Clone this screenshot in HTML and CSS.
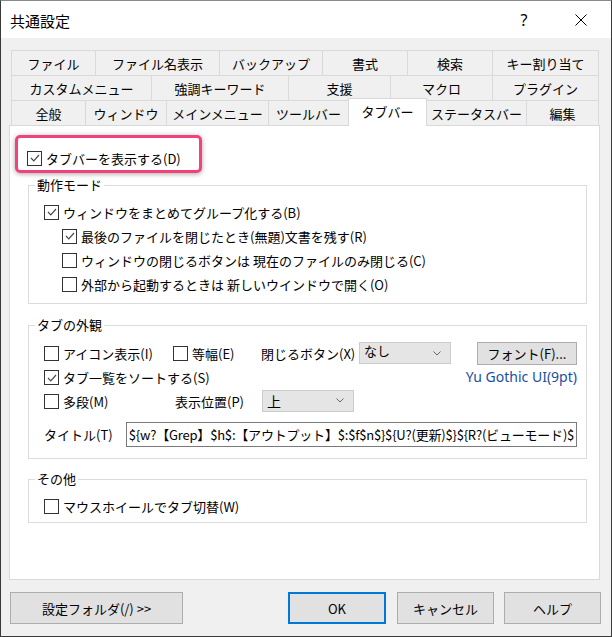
FILE: index.html
```html
<!DOCTYPE html>
<html lang="ja">
<head>
    <meta charset="UTF-8">
    <title>共通設定</title>
    <link rel="stylesheet" href="styles.css">
</head>
<body>
<div class="window">
    <div class="titlebar">
        <span class="title">共通設定</span>
        <span class="tb-help">?</span>
        <span class="tb-close">
            <svg width="12" height="12" viewBox="0 0 12 12"><path d="M0.5 0.5 L11.5 11.5 M11.5 0.5 L0.5 11.5" stroke="#000" stroke-width="1" fill="none"/></svg>
        </span>
    </div>

    <!-- タブ -->
    <div class="tabs">
        <div class="tab-row">
            <div class="tab w84">ファイル</div>
            <div class="tab w124">ファイル名表示</div>
            <div class="tab w103">バックアップ</div>
            <div class="tab w85">書式</div>
            <div class="tab w85">検索</div>
            <div class="tab w107 last">キー割り当て</div>
        </div>
        <div class="tab-row">
            <div class="tab w140">カスタムメニュー</div>
            <div class="tab w137">強調キーワード</div>
            <div class="tab w102">支援</div>
            <div class="tab w102">マクロ</div>
            <div class="tab w107 last">プラグイン</div>
        </div>
        <div class="tab-row">
            <div class="tab w74">全般</div>
            <div class="tab w81">ウィンドウ</div>
            <div class="tab w102">メインメニュー</div>
            <div class="tab w80">ツールバー</div>
            <div class="tab w78 active">タブバー</div>
            <div class="tab w100">ステータスバー</div>
            <div class="tab w73 last">編集</div>
        </div>
    </div>

    <div class="panel">
        <div class="highlight">
            <label class="check">
                <span class="box"><svg width="12" height="12" viewBox="0 0 12 12"><polyline points="2,6 4.8,8.8 10,3" fill="none" stroke="#4a4a4a" stroke-width="1.2"/></svg></span>タブバーを表示する(D)
            </label>
        </div>

        <fieldset class="group">
            <legend>動作モード</legend>
            <div class="group-body mode">
                <label class="check">
                    <span class="box"><svg width="12" height="12" viewBox="0 0 12 12"><polyline points="2,6 4.8,8.8 10,3" fill="none" stroke="#4a4a4a" stroke-width="1.2"/></svg></span>ウィンドウをまとめてグループ化する(B)
                </label>
                <label class="check sub">
                    <span class="box"><svg width="12" height="12" viewBox="0 0 12 12"><polyline points="2,6 4.8,8.8 10,3" fill="none" stroke="#4a4a4a" stroke-width="1.2"/></svg></span>最後のファイルを閉じたとき(無題)文書を残す(R)
                </label>
                <label class="check sub">
                    <span class="box"></span>ウィンドウの閉じるボタンは 現在のファイルのみ閉じる(C)
                </label>
                <label class="check sub">
                    <span class="box"></span>外部から起動するときは 新しいウインドウで開く(O)
                </label>
            </div>
        </fieldset>

        <fieldset class="group look">
            <legend>タブの外観</legend>
            <div class="group-body look-body">
                <div class="row row-a">
                    <label class="check c-icon"><span class="box"></span>アイコン表示(I)</label>
                    <label class="check c-same"><span class="box"></span>等幅(E)</label>
                    <span class="field-label l-close">閉じるボタン(X)</span>
                    <div class="combo">
                        <span>なし</span>
                        <svg width="8" height="5" viewBox="0 0 8 5"><polyline points="0.5,0.5 4,4 7.5,0.5" fill="none" stroke="#666" stroke-width="1"/></svg>
                    </div>
                    <div class="btn font-btn">フォント(F)...</div>
                </div>
                <div class="row row-b">
                    <label class="check">
                        <span class="box"><svg width="12" height="12" viewBox="0 0 12 12"><polyline points="2,6 4.8,8.8 10,3" fill="none" stroke="#4a4a4a" stroke-width="1.2"/></svg></span>タブ一覧をソートする(S)
                    </label>
                    <span class="font-name">Yu Gothic UI(9pt)</span>
                </div>
                <div class="row row-c">
                    <label class="check c-multi"><span class="box"></span>多段(M)</label>
                    <span class="field-label l-pos">表示位置(P)</span>
                    <div class="combo">
                        <span>上</span>
                        <svg width="8" height="5" viewBox="0 0 8 5"><polyline points="0.5,0.5 4,4 7.5,0.5" fill="none" stroke="#666" stroke-width="1"/></svg>
                    </div>
                </div>
                <div class="row row-d">
                    <span class="field-label l-title">タイトル(T)</span>
                    <div class="text-input">${w?【Grep】$h$:【アウトプット】$:$f$n$}${U?(更新)$}${R?(ビューモード)$</div>
                </div>
            </div>
        </fieldset>

        <fieldset class="group other">
            <legend>その他</legend>
            <div class="group-body other-body">
                <label class="check"><span class="box"></span>マウスホイールでタブ切替(W)</label>
            </div>
        </fieldset>
    </div>

    <div class="buttons">
        <div class="btn folder-btn">設定フォルダ(/) &gt;&gt;</div>
        <div class="btn ok-btn">OK</div>
        <div class="btn cancel-btn">キャンセル</div>
        <div class="btn help-btn">ヘルプ</div>
    </div>
</div>
</body>
</html>
```

FILE: styles.css
```css
body {
    margin: 0;
    font-family: "Noto Sans CJK JP", "Noto Sans", sans-serif;
    font-size: 13px;
    color: #000;
}

.window {
    width: 612px;
    height: 637px;
    box-sizing: border-box;
    border: 1px solid #3a3a3a;
    border-top-color: #8a8a8a;
    background: #f0f0f0;
}

/* タイトルバー */
.titlebar {
    height: 37px;
    background: #fff;
    display: flex;
    align-items: center;
}

.title {
    padding-left: 9px;
    padding-top: 2px;
    font-size: 15px;
    flex: 1;
}

.tb-help {
    width: 46px;
    text-align: center;
    font-family: "Noto Sans", sans-serif;
    font-size: 16px;
    padding-top: 1px;
}

.tb-close {
    width: 46px;
    margin-left: 11px;
    margin-right: 7px;
    display: flex;
    justify-content: center;
    padding-top: 1px;
}

/* タブ */
.tabs {
    margin: 12px 0 0 10px;
}

.tab-row {
    display: flex;
    height: 25px;
}

.tab {
    box-sizing: border-box;
    height: 25px;
    border-top: 1px solid #d9d9d9;
    border-left: 1px solid #d9d9d9;
    text-align: center;
    line-height: 24px;
    padding-top: 1px;
    white-space: nowrap;
}

.tab.last {
    border-right: 1px solid #d9d9d9;
}

.tab.active {
    background: #fff;
    height: 28px;
    margin-top: -2px;
    margin-bottom: -1px;
    margin-right: -1px;
    border-right: 1px solid #d9d9d9;
    width: 79px;
    line-height: 24px;
    z-index: 2;
}

.w73 { width: 73px; }
.w74 { width: 74px; }
.w78 { width: 78px; }
.w80 { width: 80px; }
.w81 { width: 81px; }
.w84 { width: 84px; }
.w85 { width: 85px; }
.w100 { width: 100px; }
.w102 { width: 102px; }
.w103 { width: 103px; }
.w107 { width: 107px; }
.w124 { width: 124px; }
.w137 { width: 137px; }
.w140 { width: 140px; }

/* パネル */
.panel {
    margin-left: 8px;
    width: 591px;
    height: 455px;
    box-sizing: border-box;
    background: #fff;
    border: 1px solid #d9d9d9;
    overflow: hidden;
}

.highlight {
    margin: 9px 0 0 5px;
    width: 187px;
    height: 38px;
    box-sizing: border-box;
    border: 3px solid #f2427b;
    border-radius: 5px;
    box-shadow: 0 1px 5px rgba(0, 0, 0, .35);
    padding: 8px 0 0 9px;
}

/* チェックボックス */
.check {
    display: flex;
    align-items: center;
    height: 24px;
    white-space: nowrap;
}

.box {
    width: 15px;
    height: 15px;
    box-sizing: border-box;
    border: 1px solid #333;
    background: #fff;
    margin-right: 4px;
    flex: none;
    display: flex;
    align-items: center;
    justify-content: center;
}

.check.sub {
    margin-left: 18px;
}

/* グループ */
.group {
    margin: 5px 0 0 18px;
    padding: 0;
    width: 559px;
    box-sizing: border-box;
    min-inline-size: 0;
    border: 1px solid #dcdcdc;
}

.group legend {
    margin-left: 6px;
    padding: 0 2px;
    line-height: 14px;
    font-size: 13px;
}

.group.look {
    margin-top: 14px;
}

.group.other {
    margin-top: 13px;
}

.group-body.mode {
    padding: 8px 0 7px 15px;
}

.look-body {
    padding: 9px 9px 10px 15px;
}

.other-body {
    padding: 8px 0 4px 15px;
}

.row {
    display: flex;
    align-items: center;
}

.row-a { height: 24px; }
.row-b { height: 25px; }
.row-c { height: 22px; }
.row-d { height: 27px; margin-top: 9px; }

.c-icon { width: 129px; }
.c-same { width: 88px; }
.c-multi { width: 131px; }

.field-label {
    white-space: nowrap;
}

.l-close { width: 98px; }
.l-pos { width: 87px; }
.l-title { width: 82px; }

.combo {
    width: 92px;
    height: 22px;
    box-sizing: border-box;
    border: 1px solid #cccccc;
    background: #e5e5e5;
    display: flex;
    justify-content: space-between;
    padding: 0 9px 0 4px;
}

.combo span {
    line-height: 16px;
}

.combo svg {
    margin-top: 8px;
}

.row-c .combo span {
    line-height: 20px;
    font-size: 14px;
}

.row-c .combo svg {
    margin-top: 7px;
}

.font-name {
    margin-left: auto;
    font-family: "Noto Sans", sans-serif;
    font-size: 14px;
    color: #1b4f9c;
    padding-bottom: 3px;
}

.text-input {
    width: 452px;
    height: 25px;
    box-sizing: border-box;
    border: 1px solid #7a7a7a;
    background: #fff;
    padding-left: 2px;
    line-height: 23px;
    letter-spacing: -0.2px;
    white-space: nowrap;
    overflow: hidden;
}

/* ボタン */
.btn {
    box-sizing: border-box;
    border: 1px solid #adadad;
    background: #e1e1e1;
    display: flex;
    align-items: center;
    justify-content: center;
    white-space: nowrap;
}

.font-btn {
    margin-left: auto;
    width: 100px;
    height: 23px;
}

.buttons {
    display: flex;
    margin-top: 12px;
    padding: 0 10px 0 9px;
}

.buttons .btn {
    height: 32px;
}

.folder-btn {
    width: 173px;
}

.ok-btn {
    margin-left: auto;
    width: 98px;
    border: 2px solid #0078d7;
}

.cancel-btn {
    margin-left: 11px;
    width: 97px;
}

.help-btn {
    margin-left: 10px;
    width: 97px;
}
```
